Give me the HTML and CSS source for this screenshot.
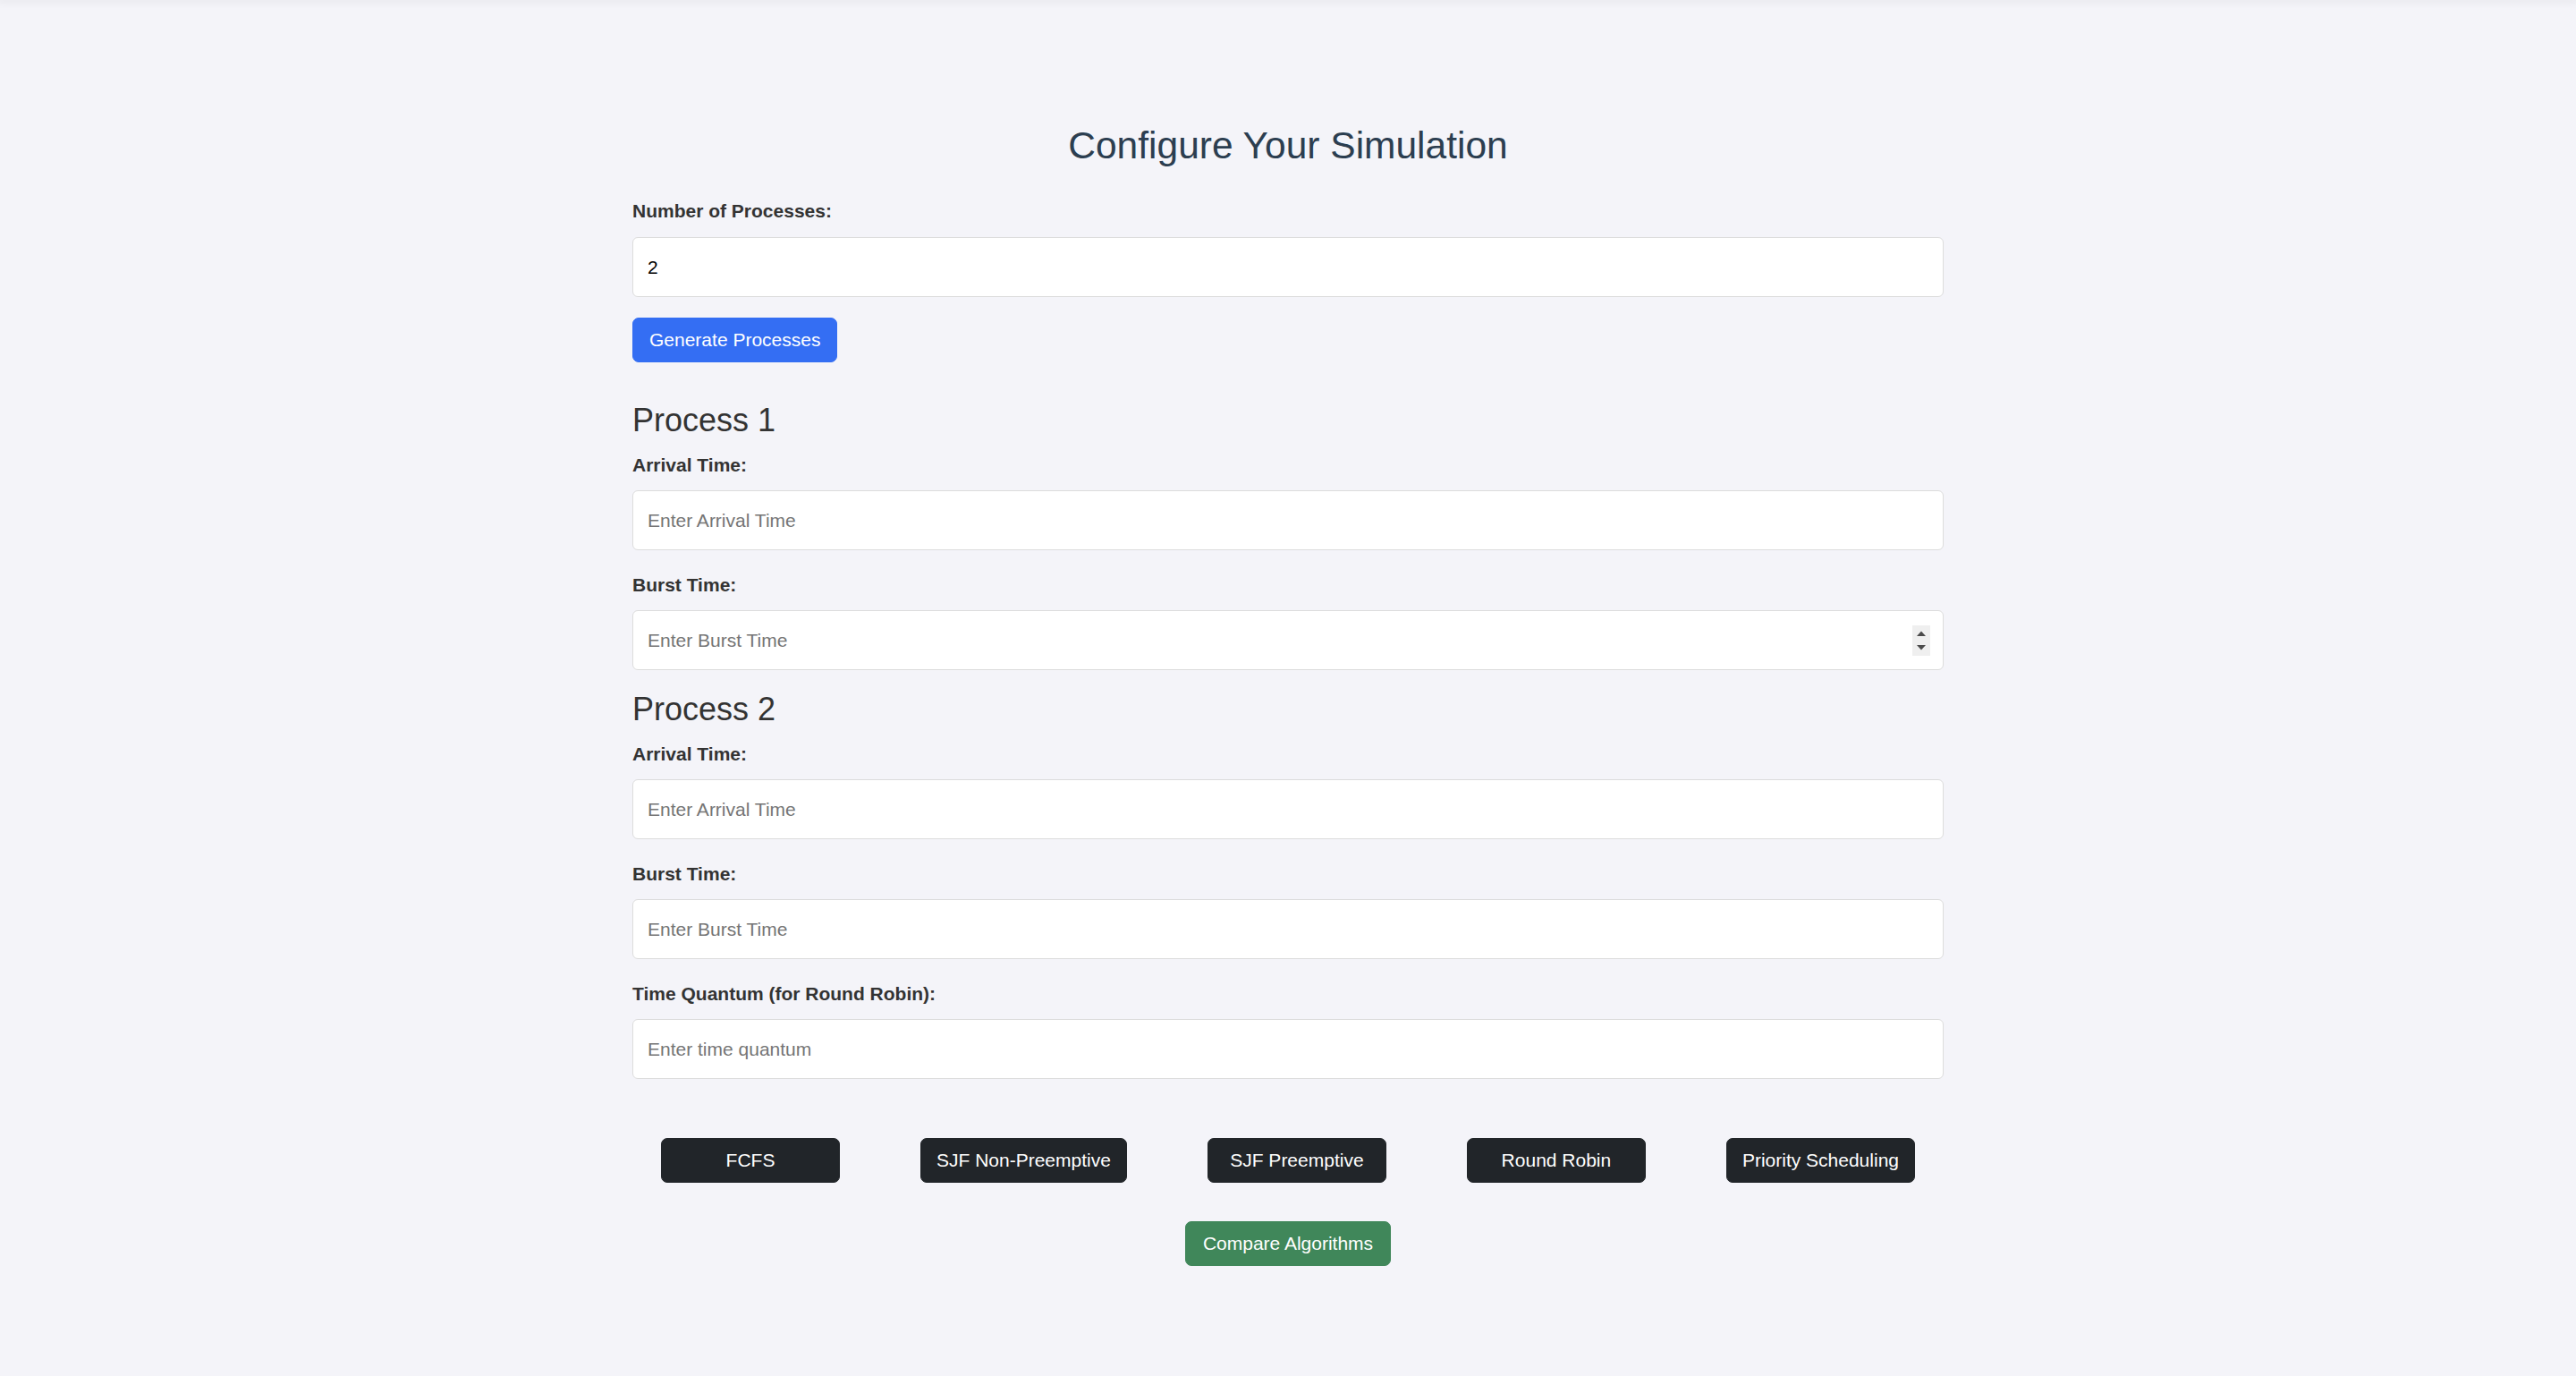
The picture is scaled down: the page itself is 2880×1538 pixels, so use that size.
FILE: index.html
```html
<!DOCTYPE html>
<html lang="en">
<head>
<meta charset="utf-8">
<title>CPU Scheduling Simulator</title>
<link rel="stylesheet" href="styles.css">
</head>
<body>
<div class="topbar"></div>
<main class="container">
  <h2 class="title">Configure Your Simulation</h2>

  <div class="field">
    <label class="label" for="num">Number of Processes:</label>
    <input class="input" id="num" type="number" value="2">
  </div>
  <div class="gen-row">
    <button class="btn btn-primary" type="button">Generate Processes</button>
  </div>

  <section class="process">
    <h3 class="process-title">Process 1</h3>
    <div class="fields">
      <div class="field">
        <label class="label">Arrival Time:</label>
        <input class="input" type="number" placeholder="Enter Arrival Time">
      </div>
      <div class="field">
        <label class="label">Burst Time:</label>
        <div class="input-wrap">
          <input class="input" type="number" placeholder="Enter Burst Time">
          <span class="spinner" aria-hidden="true">
            <svg width="20" height="34" viewBox="0 0 20 34">
              <rect width="20" height="34" fill="#efefef"/>
              <path d="M5 12 L10 6.5 L15 12 Z" fill="#4a4a4a"/>
              <path d="M5 22 L15 22 L10 27.5 Z" fill="#4a4a4a"/>
            </svg>
          </span>
        </div>
      </div>
    </div>
  </section>

  <section class="process">
    <h3 class="process-title">Process 2</h3>
    <div class="fields">
      <div class="field">
        <label class="label">Arrival Time:</label>
        <input class="input" type="number" placeholder="Enter Arrival Time">
      </div>
      <div class="field">
        <label class="label">Burst Time:</label>
        <input class="input" type="number" placeholder="Enter Burst Time">
      </div>
      <div class="field">
        <label class="label">Time Quantum (for Round Robin):</label>
        <input class="input" type="number" placeholder="Enter time quantum">
      </div>
    </div>
  </section>

  <div class="algo-row">
    <button class="btn btn-dark" type="button">FCFS</button>
    <button class="btn btn-dark" type="button">SJF Non-Preemptive</button>
    <button class="btn btn-dark" type="button">SJF Preemptive</button>
    <button class="btn btn-dark" type="button">Round Robin</button>
    <button class="btn btn-dark" type="button">Priority Scheduling</button>
  </div>
  <div class="compare-row">
    <button class="btn btn-success" type="button">Compare Algorithms</button>
  </div>
</main>
</body>
</html>
```

FILE: styles.css
```css
* {
  box-sizing: border-box;
}

html, body {
  margin: 0;
  padding: 0;
}

body {
  background: #f4f4f9;
  font-family: "Liberation Sans", Arial, sans-serif;
  color: #333;
  min-height: 1538px;
}

.topbar {
  height: 0;
  box-shadow: 0 0 8px 3px rgba(0, 0, 0, 0.06);
}

.container {
  width: 1466px;
  margin: 0 auto;
  padding-top: 139px;
}

.title {
  margin: 0 0 37px;
  font-size: 42.5px;
  line-height: 48px;
  font-weight: 400;
  text-align: center;
  color: #2c3e50;
}

.field {
  display: flex;
  flex-direction: column;
}

.label {
  display: block;
  font-size: 21px;
  line-height: 24px;
  font-weight: 700;
  color: #333;
  margin-bottom: 17px;
}

.fields .label {
  margin-bottom: 16px;
}

.input {
  display: block;
  width: 100%;
  height: 67px;
  padding: 0 16px;
  border: 1px solid #dcdcdc;
  border-radius: 6px;
  background: #fff;
  font-family: "Liberation Sans", Arial, sans-serif;
  font-size: 21px;
  color: #000;
  outline: none;
  -moz-appearance: textfield;
}

.input::placeholder {
  color: #757575;
}

.input::-webkit-inner-spin-button,
.input::-webkit-outer-spin-button {
  -webkit-appearance: none;
  margin: 0;
}

.input-wrap {
  position: relative;
}

.spinner {
  position: absolute;
  right: 15px;
  top: 17px;
  width: 20px;
  height: 34px;
  display: block;
}

.spinner svg {
  display: block;
}

.gen-row {
  margin-top: 23px;
}

.btn {
  display: inline-flex;
  align-items: center;
  justify-content: center;
  height: 50px;
  padding: 0 17px;
  border: 1px solid transparent;
  border-radius: 7px;
  font-family: "Liberation Sans", Arial, sans-serif;
  font-size: 21px;
  color: #fff;
  cursor: pointer;
  white-space: nowrap;
}

.btn-primary {
  background: #346ef3;
  border-color: #346ef3;
  padding: 0 18px;
}

.btn-dark {
  background: #212529;
  border-color: #212529;
  min-width: 200px;
}

.btn-success {
  background: #40875a;
  border-color: #40875a;
  padding: 0 19px;
}

.process {
  margin-top: 23px;
}

.gen-row + .process {
  margin-top: 44px;
}

.process-title {
  margin: 0 0 17px;
  font-size: 36px;
  line-height: 42px;
  font-weight: 400;
  color: #333;
}

.fields {
  display: flex;
  flex-direction: column;
  gap: 27px;
}

.algo-row {
  display: flex;
  justify-content: center;
  gap: 90px;
  margin-top: 66px;
}

.compare-row {
  display: flex;
  justify-content: center;
  margin-top: 43px;
}
```
